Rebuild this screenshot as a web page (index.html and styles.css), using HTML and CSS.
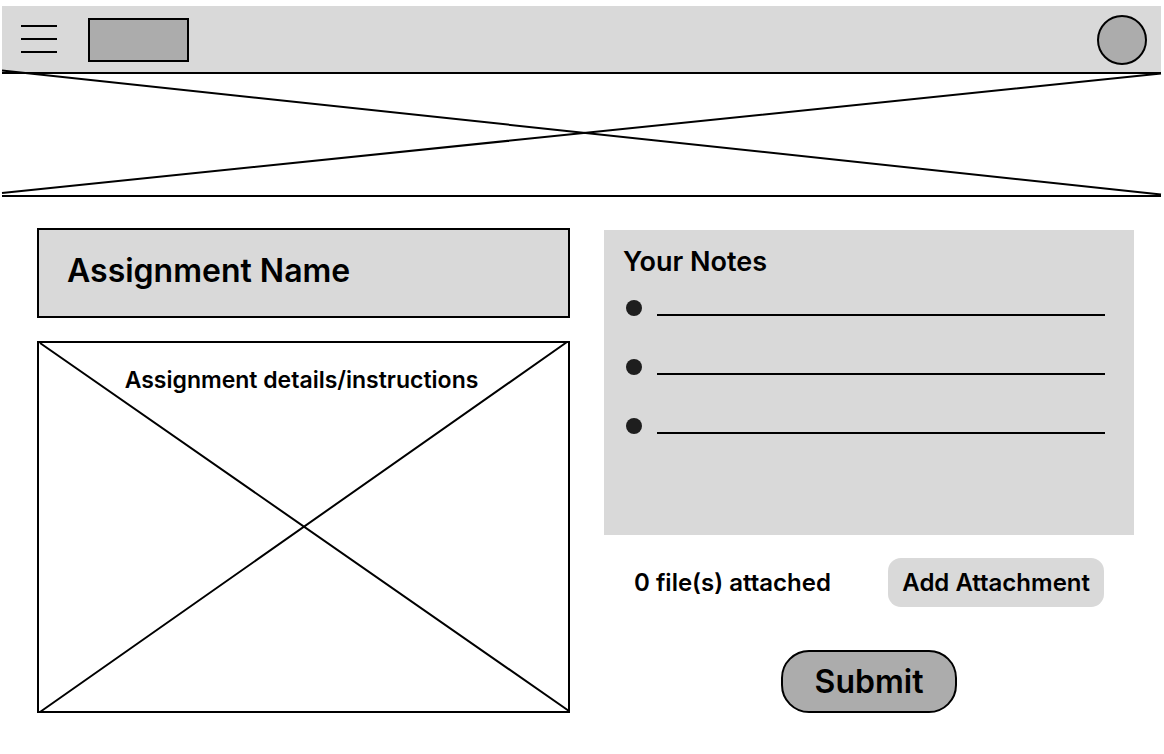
FILE: index.html
```html
<!DOCTYPE html>
<html lang="en">
<head>
<meta charset="utf-8">
<meta name="viewport" content="width=device-width, initial-scale=1">
<title>Assignment</title>
<link rel="stylesheet" href="styles.css">
</head>
<body>
<header class="topbar">
  <button class="menu" type="button" aria-label="Menu">
    <span class="menu-line"></span>
    <span class="menu-line"></span>
    <span class="menu-line"></span>
  </button>
  <a class="logo" href="#" aria-label="Home"></a>
  <button class="avatar" type="button" aria-label="Account"></button>
</header>
<div class="banner">
  <svg class="cross" viewBox="0 0 1159 121" preserveAspectRatio="none" aria-hidden="true">
    <path d="M0 -3.5L1159 120.5M0 119L1159 -.5"/>
  </svg>
</div>
<main class="content">
  <section class="column">
    <div class="title-box"><h1 class="title">Assignment Name</h1></div>
    <div class="details">
      <svg class="cross" viewBox="0 0 529 366" preserveAspectRatio="none" aria-hidden="true">
        <path d="M1 0L530 366M1 367L528 -1"/>
      </svg>
      <p class="details-text">Assignment details/instructions</p>
    </div>
  </section>
  <form class="column side">
    <section class="notes">
      <h2 class="notes-title">Your Notes</h2>
      <ul class="notes-list">
        <li class="note"><span class="dot"></span><input class="note-input" type="text" aria-label="Note 1"></li>
        <li class="note"><span class="dot"></span><input class="note-input" type="text" aria-label="Note 2"></li>
        <li class="note"><span class="dot"></span><input class="note-input" type="text" aria-label="Note 3"></li>
      </ul>
    </section>
    <div class="attach-row">
      <span class="attach-count">0 file(s) attached</span>
      <button class="attach" type="button">Add Attachment</button>
    </div>
    <button class="submit" type="submit">Submit</button>
  </form>
</main>
</body>
</html>
```
FILE: styles.css
```css
* {
  box-sizing: border-box;
}

body {
  margin: 0;
  padding: 6px 3px 0 2px;
  background: #fff;
  color: #000;
  font-family: Inter, "Liberation Sans", sans-serif;
  font-weight: 600;
}

button {
  padding: 0;
  border: 0;
  color: inherit;
  font: inherit;
  cursor: pointer;
}

h1,
h2,
p,
ul {
  margin: 0;
  padding: 0;
  font-weight: 600;
}

.topbar {
  display: flex;
  align-items: center;
  height: 68px;
  padding: 2px 14px 0 19px;
  background: #d9d9d9;
  border-bottom: 2px solid #000;
}

.menu {
  display: flex;
  flex-direction: column;
  gap: 11px;
  width: 36px;
  margin-bottom: 2px;
  background: none;
}

.menu-line {
  height: 2px;
  background: #000;
}

.logo {
  width: 101px;
  height: 44px;
  margin-left: 31px;
  background: #acacac;
  border: 2px solid #000;
}

.avatar {
  width: 50px;
  height: 50px;
  margin-left: auto;
  background: #acacac;
  border: 2px solid #000;
  border-radius: 50%;
}

.banner {
  position: relative;
  height: 123px;
  border-bottom: 2px solid #000;
}

.cross {
  position: absolute;
  inset: 0;
  width: 100%;
  height: 100%;
  overflow: visible;
  fill: none;
  stroke: #000;
  stroke-width: 2;
}

.cross path {
  vector-effect: non-scaling-stroke;
}

.content {
  display: grid;
  grid-template-columns: 533fr 530fr;
  gap: 34px;
  padding: 31px 27px 40px 35px;
}

.column {
  display: flex;
  flex-direction: column;
}

.title-box {
  padding: 22px 28px 26px;
  background: #d9d9d9;
  border: 2px solid #000;
}

.title {
  font-size: 32px;
  line-height: 38px;
}

.details {
  position: relative;
  flex: 1;
  min-height: 370px;
  margin-top: 23px;
  padding: 21px 0 0;
  border: 2px solid #000;
}

.details-text {
  position: relative;
  padding-right: 4px;
  font-size: 23px;
  line-height: 32px;
  text-align: center;
}

.side {
  padding-top: 2px;
}

.notes {
  padding: 16px 29px 101px 19px;
  background: #d9d9d9;
}

.notes-title {
  font-size: 27px;
  line-height: 32px;
}

.notes-list {
  display: grid;
  gap: 27px;
  margin-top: 6px;
  padding-left: 3px;
  list-style: none;
}

.note {
  display: flex;
  align-items: flex-end;
  gap: 15px;
}

.dot {
  width: 16px;
  height: 16px;
  background: #1e1e1e;
  border-radius: 50%;
}

.note-input {
  flex: 1;
  min-width: 0;
  height: 32px;
  padding: 0;
  background: none;
  border: 0;
  border-bottom: 2px solid #000;
  font: inherit;
}

.attach-row {
  display: flex;
  align-items: center;
  justify-content: space-between;
  margin-top: 23px;
  padding: 0 30px;
  font-size: 24px;
  line-height: 29px;
}

.attach {
  padding: 10px 14px;
  background: #d9d9d9;
  border-radius: 13px;
}

.submit {
  align-self: center;
  margin: 43px 0 0;
  padding: 10px 32px;
  background: #acacac;
  border: 2px solid #000;
  border-radius: 28px;
  font-size: 32px;
  line-height: 39px;
}
```
